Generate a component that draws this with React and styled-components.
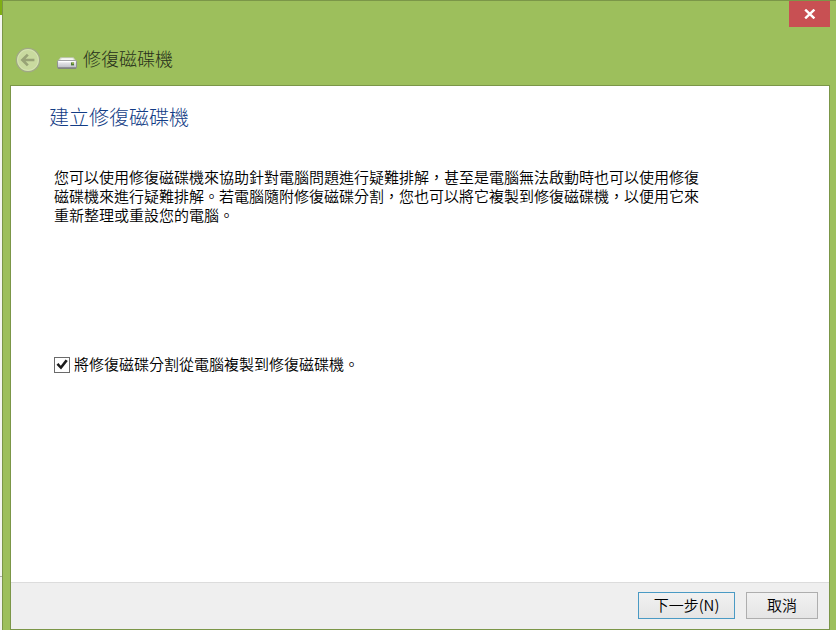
import React, { useState } from 'react';
import styled, { createGlobalStyle } from 'styled-components';

const colors = {
  frame: '#9dbf5c',
  frameBorder: '#7b9648',
  panel: '#ffffff',
  footer: '#efefef',
  footerBorder: '#dcdcdc',
  heading: '#123c85',
  text: '#000000',
  close: '#c85053',
  focus: '#4a9ac4',
  buttonBorder: '#aeaeae',
};

const App = () => {
  const [copyPartition, setCopyPartition] = useState(true);

  return (
    <>
      <GlobalStyle />
      <Desktop lang="zh-Hant">
        <Backdrop>
          <BackdropTop />
          <BackdropBody />
          <BackdropFooter />
        </Backdrop>
        <Window>
          <TitleBar>
            <CloseButton type="button" aria-label="關閉">
              <CloseIcon />
            </CloseButton>
          </TitleBar>

          <NavRow>
            <BackButton type="button" aria-label="上一步" disabled>
              <BackIcon />
            </BackButton>
            <DriveIcon />
            <WindowTitle>修復磁碟機</WindowTitle>
          </NavRow>

          <Panel>
            <Content>
              <Heading>建立修復磁碟機</Heading>
              <Description>
                您可以使用修復磁碟機來協助針對電腦問題進行疑難排解，甚至是電腦無法啟動時也可以使用修復磁碟機來進行疑難排解。若電腦隨附修復磁碟分割，您也可以將它複製到修復磁碟機，以便用它來重新整理或重設您的電腦。
              </Description>
              <CheckLabel>
                <CheckBox
                  type="checkbox"
                  checked={copyPartition}
                  onChange={(e) => setCopyPartition(e.target.checked)}
                />
                <CheckText>將修復磁碟分割從電腦複製到修復磁碟機。</CheckText>
              </CheckLabel>
            </Content>

            <Footer>
              <Button type="button" $primary>
                下一步(N)
              </Button>
              <Button type="button">取消</Button>
            </Footer>
          </Panel>
        </Window>
      </Desktop>
    </>
  );
};

export default App;

// icons
const CloseIcon = () => (
  <svg width="12" height="10" viewBox="0 0 12 10" aria-hidden="true">
    <path d="M1.2 0.6 L10.4 9.4 M10.4 0.6 L1.2 9.4" stroke="#fff" strokeWidth="2.4" />
  </svg>
);

const BackIcon = () => (
  <svg width="26" height="26" viewBox="0 0 26 26" aria-hidden="true">
    <circle cx="13" cy="13" r="11.6" fill="#c9da9f" stroke="#a0a984" strokeWidth="1.4" />
    <circle cx="13" cy="13" r="10.4" fill="none" stroke="#d7e4b5" strokeWidth="0.9" />
    <path d="M7 13 H19.4 M12.8 7.6 L7.4 13 L12.8 18.4" fill="none" stroke="#98a376" strokeWidth="2.7" />
  </svg>
);

const DriveIcon = () => (
  <svg width="20" height="18" viewBox="0 -6 20 18" aria-hidden="true">
    <defs>
      <linearGradient id="driveFront" x1="0" y1="0" x2="0" y2="1">
        <stop offset="0" stopColor="#f4f4f6" />
        <stop offset="1" stopColor="#b9bac2" />
      </linearGradient>
    </defs>
    <path d="M3.6 0.5 H16.4 L19.4 4.4 H0.6 Z" fill="#dfe3d8" stroke="#b9c0ae" strokeWidth="0.6" />
    <path d="M5 1.2 H15.4 L17 3.4 H3.2 Z" fill="#f6f7f4" />
    <rect x="0.5" y="3.6" width="19" height="7.7" rx="1" fill="url(#driveFront)" stroke="#85858b" strokeWidth="0.8" />
    <path d="M1.4 4.6 H18.4" stroke="#fff" strokeWidth="1.2" />
    <path d="M1 11 H19" stroke="#77777d" strokeWidth="1.2" />
    <rect x="14" y="5.4" width="3" height="3" fill="#4f7d35" />
    <rect x="15.2" y="5.4" width="1.6" height="1.4" fill="#b6c95c" />
  </svg>
);

// styles
const GlobalStyle = createGlobalStyle`
  * {
    box-sizing: border-box;
  }

  body {
    margin: 0;
    color: ${colors.text};
    font-family: "Noto Sans CJK TC", sans-serif;
    font-size: 15px;
    font-weight: 350;
    line-height: 19px;
  }

  button,
  input {
    margin: 0;
    font: inherit;
    color: inherit;
  }

  svg {
    display: block;
    flex: none;
  }
`;

const Desktop = styled.div`
  display: grid;
  grid-template-columns: 2px 1fr;
  min-height: 100vh;
`;

const Backdrop = styled.div`
  display: flex;
  flex-direction: column;
`;

const BackdropTop = styled.div`
  height: 15px;
  background: #7fae14;
`;

const BackdropBody = styled.div`
  flex: 1;
  background: #f4f6f1;
  border-bottom: 1px solid #a9aca5;
`;

const BackdropFooter = styled.div`
  height: 53px;
  background: #f1f2ef;
`;

const Window = styled.main`
  display: flex;
  flex-direction: column;
  padding: 0 6px 0 7px;
  background: ${colors.frame};
  border: solid ${colors.frameBorder};
  border-width: 1px 0 0 1px;
`;

const TitleBar = styled.div`
  display: flex;
  justify-content: flex-end;
`;

const CloseButton = styled.button`
  display: flex;
  align-items: center;
  justify-content: center;
  width: 41px;
  height: 26px;
  padding: 0;
  border: none;
  background: ${colors.close};
`;

const NavRow = styled.header`
  display: flex;
  align-items: center;
  height: 58px;
  padding: 8px 5px 0;
`;

const BackButton = styled.button`
  margin-right: 16px;
  padding: 0;
  border: none;
  background: none;
`;

const WindowTitle = styled.span`
  margin-left: 6px;
  padding-bottom: 4px;
  color: #27301a;
  font-size: 18px;
  font-weight: 300;
  line-height: 24px;
`;

const Panel = styled.section`
  display: flex;
  flex: 1;
  flex-direction: column;
  border: 1px solid ${colors.frameBorder};
  background: ${colors.panel};
`;

const Content = styled.div`
  flex: 1;
  padding: 18px 38px;
`;

const Heading = styled.h1`
  margin: 0 0 37px;
  color: ${colors.heading};
  font-size: 20px;
  font-weight: 300;
  line-height: 26px;
`;

const Description = styled.p`
  max-width: 655px;
  margin: 0 0 130px;
  padding-left: 5px;
`;

const CheckLabel = styled.label`
  display: flex;
  align-items: center;
  gap: 4px;
  padding-left: 5px;
`;

const CheckText = styled.span`
  padding-bottom: 2px;
`;

const CheckBox = styled.input`
  display: grid;
  place-content: center;
  width: 16px;
  height: 16px;
  appearance: none;
  border: 1px solid #6a6a6a;
  background: #fff;

  &:checked::before {
    content: '';
    width: 12px;
    height: 12px;
    background: #1c1c1c;
    clip-path: polygon(4% 52%, 20% 38%, 40% 60%, 80% 8%, 98% 20%, 42% 92%);
  }
`;

const Footer = styled.footer`
  display: flex;
  justify-content: flex-end;
  gap: 11px;
  padding: 9px 11px 10px;
  border-top: 1px solid ${colors.footerBorder};
  background: ${colors.footer};
`;

const Button = styled.button`
  width: ${({ $primary }) => ($primary ? '97px' : '72px')};
  height: 27px;
  padding: 0 0 2px;
  border: 1px solid ${({ $primary }) => ($primary ? colors.focus : colors.buttonBorder)};
  background: linear-gradient(#f1f1f1, #e5e5e5);
`;
